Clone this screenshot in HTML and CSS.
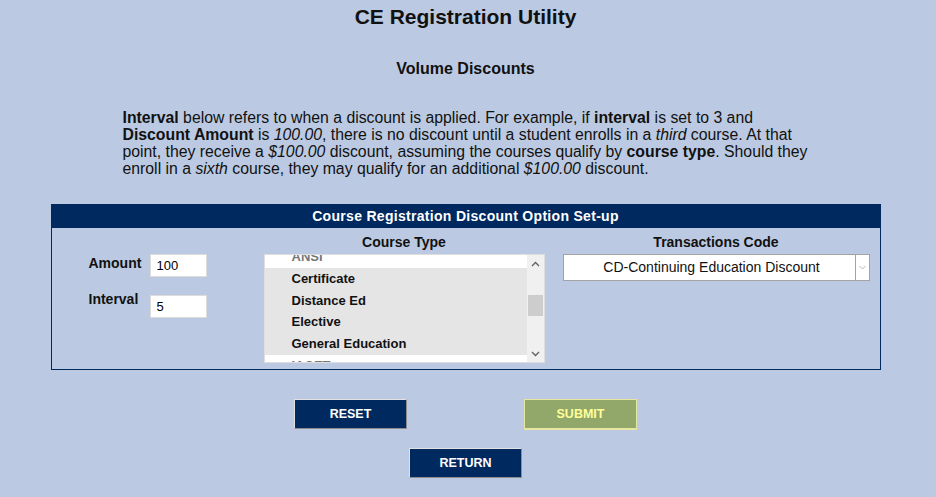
FILE: index.html
```html
<!DOCTYPE html>
<html lang="en">
<head>
<meta charset="utf-8">
<title>CE Registration Utility</title>
<link rel="stylesheet" href="styles.css">
</head>
<body>
<div class="page">
  <h1 class="title">CE Registration Utility</h1>
  <h2 class="subtitle">Volume Discounts</h2>
  <p class="intro"><b>Interval</b> below refers to when a discount is applied. For example, if <b>interval</b> is set to 3 and <b>Discount Amount</b> is <i>100.00</i>, there is no discount until a student enrolls in a <i>third</i> course. At that point, they receive a <i>$100.00</i> discount, assuming the courses qualify by <b>course type</b>. Should they enroll in a <i>sixth</i> course, they may qualify for an additional <i>$100.00</i> discount.</p>

  <section class="panel">
    <div class="panel-head">Course Registration Discount Option Set-up</div>
    <div class="panel-body">
      <div class="fields">
        <label class="field-label">Amount</label>
        <div class="textbox">100</div>
        <label class="field-label field-label-up">Interval</label>
        <div class="textbox">5</div>
      </div>
      <div class="col col-list">
        <div class="col-title">Course Type</div>
        <div class="listbox">
          <ul class="options">
            <li class="opt muted">ANSI</li>
            <li class="opt sel">Certificate</li>
            <li class="opt sel">Distance Ed</li>
            <li class="opt sel">Elective</li>
            <li class="opt sel">General Education</li>
            <li class="opt muted">IACET</li>
          </ul>
          <div class="scrollbar">
            <div class="sb-btn"><svg width="9" height="6" viewBox="0 0 9 6"><path d="M1 5 L4.5 1.5 L8 5" fill="none" stroke="#606060" stroke-width="1.3"/></svg></div>
            <div class="sb-track"><div class="sb-thumb"></div></div>
            <div class="sb-btn"><svg width="9" height="6" viewBox="0 0 9 6"><path d="M1 1 L4.5 4.5 L8 1" fill="none" stroke="#606060" stroke-width="1.3"/></svg></div>
          </div>
        </div>
      </div>
      <div class="col col-select">
        <div class="col-title">Transactions Code</div>
        <div class="selectbox">
          <div class="select-value">CD-Continuing Education Discount</div>
          <div class="select-arrow"><svg width="7" height="5" viewBox="0 0 7 5"><path d="M0.5 1 L3.5 4 L6.5 1" fill="none" stroke="#b8b8b8" stroke-width="1"/></svg></div>
        </div>
      </div>
    </div>
  </section>

  <div class="actions">
    <div class="actions-row">
      <button class="btn">RESET</button>
      <button class="btn btn-submit">SUBMIT</button>
    </div>
    <div class="actions-row actions-row-2">
      <button class="btn">RETURN</button>
    </div>
  </div>
</div>
</body>
</html>
```

FILE: styles.css
```css
html, body {
  margin: 0;
  padding: 0;
  background: #bbcae2;
}
body {
  font-family: "Liberation Sans", Arial, sans-serif;
  color: #111;
}
.page {
  width: 931px;
  padding-top: 5px;
}
.title {
  margin: 0;
  font-size: 21px;
  line-height: 24px;
  font-weight: bold;
  text-align: center;
}
.subtitle {
  margin: 30px 0 0;
  font-size: 16px;
  line-height: 20px;
  font-weight: bold;
  text-align: center;
}
.intro {
  width: 688px;
  margin: 30px auto 0;
  padding-left: 2px;
  font-size: 15.8px;
  line-height: 17px;
}
.panel {
  width: 828px;
  margin: 27px auto 0;
  border: 1px solid #00295f;
  border-top: none;
}
.panel-head {
  margin: 0 -1px;
  height: 24px;
  line-height: 24px;
  background: #00295f;
  color: #fff;
  font-size: 14px;
  letter-spacing: 0.3px;
  font-weight: bold;
  text-align: center;
}
.panel-body {
  display: flex;
  height: 141px;
  padding: 5px 0 0 37px;
  box-sizing: border-box;
}
.fields {
  width: 175px;
  padding-top: 21px;
  display: grid;
  grid-template-columns: 61px 57px;
  grid-template-rows: 41px 23px;
  align-items: start;
}
.field-label {
  font-size: 14px;
  line-height: 16px;
  font-weight: bold;
  margin-top: 1px;
}
.field-label-up {
  margin-top: -4px;
}
.textbox {
  height: 23px;
  box-sizing: border-box;
  background: #fff;
  border: 1px solid #dcdcdc;
  padding: 0 6px;
  font-size: 13px;
  line-height: 21px;
  color: #000;
}
.col {
  display: flex;
  flex-direction: column;
}
.col-list {
  width: 281px;
}
.col-select {
  width: 307px;
  margin-left: 18px;
}
.col-title {
  font-size: 14px;
  line-height: 18px;
  font-weight: bold;
  text-align: center;
  margin-bottom: 3px;
}
.listbox {
  display: flex;
  height: 109px;
  box-sizing: border-box;
  border: 1px solid #dedede;
  background: #fff;
  overflow: hidden;
}
.options {
  flex: 1;
  list-style: none;
  margin: -8.7px 0 0;
  padding: 0;
}
.opt {
  height: 21.67px;
  line-height: 21.67px;
  padding-left: 27px;
  font-size: 13px;
  font-weight: bold;
  color: #111;
}
.opt.sel {
  background: #e5e5e5;
}
.opt.muted {
  color: #777;
}
.scrollbar {
  width: 17px;
  background: #f0f0f0;
  display: flex;
  flex-direction: column;
}
.sb-btn {
  height: 17px;
  display: flex;
  align-items: center;
  justify-content: center;
}
.sb-track {
  flex: 1;
  padding-top: 23px;
  display: flex;
  justify-content: center;
}
.sb-thumb {
  width: 15px;
  height: 21px;
  background: #cdcdcd;
}
.selectbox {
  display: flex;
  height: 27px;
  box-sizing: border-box;
  border: 1px solid #a3a3a3;
  background: #fff;
}
.select-value {
  flex: 1;
  text-align: center;
  font-size: 14px;
  line-height: 25px;
  color: #111;
  padding-left: 5px;
}
.select-arrow {
  width: 13px;
  border-left: 1px solid #a3a3a3;
  display: flex;
  align-items: center;
  justify-content: center;
}
.actions {
  margin-top: 29px;
}
.actions-row {
  display: flex;
  justify-content: center;
  align-items: flex-start;
  gap: 117px;
}
.actions-row-2 {
  margin-top: 18px;
}
.btn {
  width: 113px;
  height: 30px;
  box-sizing: border-box;
  background: #00295f;
  color: #fff;
  font-family: "Liberation Sans", Arial, sans-serif;
  font-size: 12.5px;
  font-weight: bold;
  border: 1px solid;
  border-color: #e2e2e2 #8c8c8c #8c8c8c #e2e2e2;
  padding: 0;
  margin: 0;
}
.btn-submit {
  height: 31px;
  background: #92a86a;
  color: #ffff99;
  border-color: #e6e69e;
  border-bottom-width: 2px;
}
```
